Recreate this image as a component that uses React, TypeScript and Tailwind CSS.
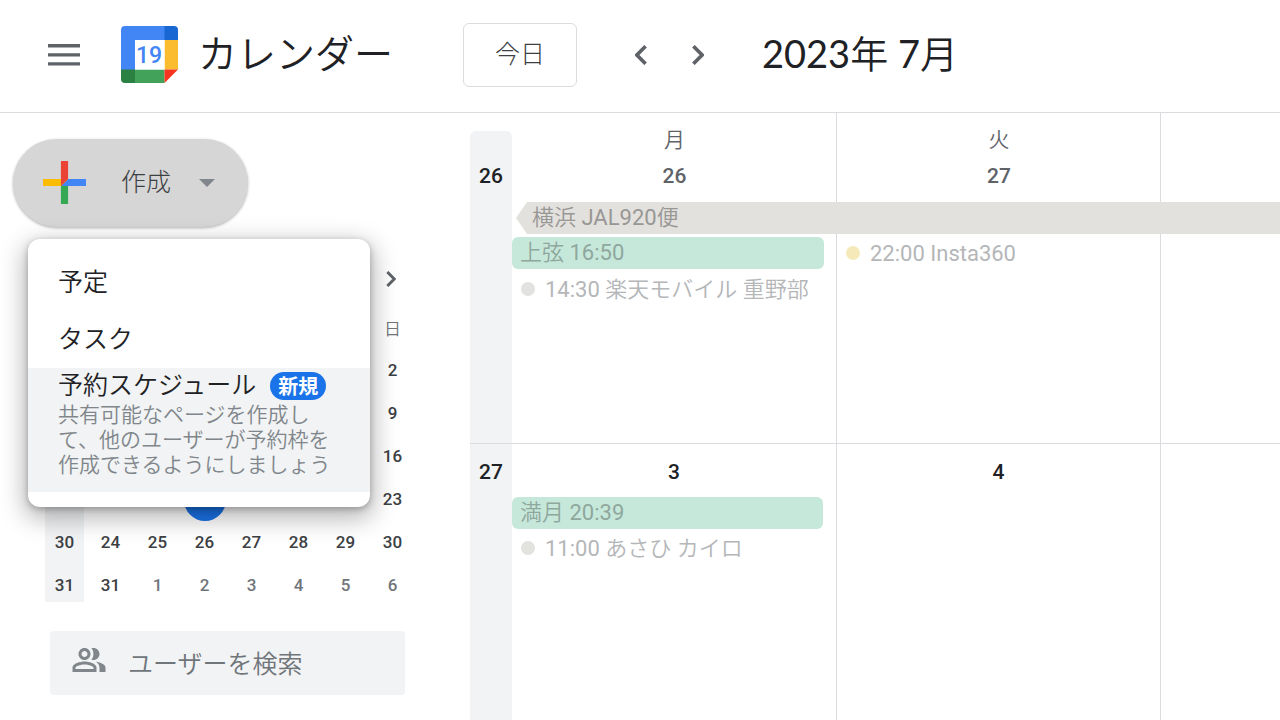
import { useState } from "react";

const miniWeekdays = [null, null, null, null, null, null, "日"];

// null cells sit under the open create menu
const miniWeeks = [
    { week: null, days: [null, null, null, null, null, null, 2] },
    { week: null, days: [null, null, null, null, null, null, 9] },
    { week: null, days: [null, null, null, null, null, null, 16] },
    { week: null, days: [null, null, null, null, null, null, 23] },
    { week: 30, days: [24, 25, 26, 27, 28, 29, 30] },
    { week: 31, days: [31, 1, 2, 3, 4, 5, 6] },
];

function Chevron({ left = false, className }: { left?: boolean; className: string }) {
    return (
        <svg viewBox="0 0 12 20" className={className} fill="none" stroke="currentColor" strokeWidth="3.6" aria-hidden="true">
            <path d={left ? "M10.6 1.2 1.9 10l8.7 8.8" : "M1.4 1.2 10.1 10l-8.7 8.8"} />
        </svg>
    );
}

function Logo() {
    return (
        <svg viewBox="0 0 57 57" className="size-[57px] shrink-0" aria-hidden="true">
            <path d="M4 0h40v14H14v30H0V4a4 4 0 0 1 4-4z" fill="#4285f4" />
            <path d="M43.5 0H53a4 4 0 0 1 4 4v10H43.5z" fill="#1967d2" />
            <path d="M43.5 14H57v29.5H43.5z" fill="#fbbc2f" />
            <path d="M14 43.5h29.5V57H14z" fill="#43a25a" />
            <path d="M0 43.5h14V57H4a4 4 0 0 1-4-4z" fill="#2a8142" />
            <path d="M43.5 43.5H57L43.5 57z" fill="#f5351f" />
            <path d="M14 14h29.5v29.5H14z" fill="#fff" />
            <text x="28" y="36.5" textAnchor="middle" fontSize="23" fontWeight="500" fontFamily="Roboto, sans-serif" fill="#4285f4">19</text>
        </svg>
    );
}

function Header() {
    return (
        <header className="flex h-[113px] items-center border-b border-[#dadce0] pb-[3px] whitespace-nowrap">
            <div className="flex w-[463px] shrink-0 items-center pl-12">
                <button type="button" aria-label="メインメニュー" className="text-[#5f6368]">
                    <svg viewBox="0 0 32 22" className="h-[22px] w-8" fill="currentColor" aria-hidden="true">
                        <path d="M0 0h32v3.4H0zM0 9.2h32v3.4H0zM0 18.2h32v3.4H0z" />
                    </svg>
                </button>
                <a href="#" className="ml-[41px] flex items-center gap-5">
                    <Logo />
                    <span className="text-[39px] leading-[56px] text-[#202124]">カレンダー</span>
                </a>
            </div>
            <button type="button" className="h-16 w-[114px] shrink-0 rounded-md border border-[#dadce0] font-[Roboto,'Noto_Sans_CJK_JP',sans-serif] text-[25px] font-light text-[#3c4043]">
                今日
            </button>
            <div className="ml-12 flex shrink-0 gap-[25px] text-[#5f6368]">
                <button type="button" aria-label="前の月" className="flex size-8 items-center justify-center">
                    <Chevron left className="h-5 w-3" />
                </button>
                <button type="button" aria-label="次の月" className="flex size-8 items-center justify-center">
                    <Chevron className="h-5 w-3" />
                </button>
            </div>
            <h1 className="ml-12 pb-1 [font-family:Lato,'Noto_Sans_CJK_JP_DemiLight','Noto_Sans_CJK_JP',sans-serif] text-[38px] leading-[56px] text-[#202124]">2023年 7月</h1>
        </header>
    );
}

function CreateMenu() {
    return (
        <div role="menu" className="absolute top-[100px] left-[15px] z-10 w-[342px] rounded-xl bg-white py-[15px] text-[25px] text-[#202124] shadow-[0_8px_24px_4px_rgba(0,0,0,0.28),0_2px_6px_rgba(0,0,0,0.25)]">
            <button type="button" role="menuitem" className="block h-[57px] w-full px-[30px] text-left">予定</button>
            <button type="button" role="menuitem" className="block h-[57px] w-full px-[30px] text-left">タスク</button>
            <button type="button" role="menuitem" className="block w-full bg-[#f1f3f4] px-[30px] pb-[14px] text-left">
                <span className="flex h-[35px] items-center gap-[14px]">
                    予約スケジュール
                    <span className="rounded-full bg-[#1a73e8] px-2 [font-family:'Noto_Sans_CJK_JP',sans-serif] text-xl leading-7 font-bold text-white">新規</span>
                </span>
                <span className="block text-[21px] leading-[25px] text-[#80868b]">
                    共有可能なページを作成して、他のユーザーが予約枠を作成できるようにしましょう
                </span>
            </button>
        </div>
    );
}

function CreateButton() {
    const [open, setOpen] = useState(true);

    return (
        <div className="relative ml-[13px]">
            <button
                type="button"
                aria-expanded={open}
                onClick={() => setOpen(!open)}
                className="flex h-[88px] w-[235px] items-center rounded-full bg-[#d6d6d6] pb-px pl-[30px] [font-family:Roboto,'Noto_Sans_CJK_JP',sans-serif] text-[25px] font-light text-[#3c4043] shadow-[0_1px_3px_rgba(0,0,0,0.3)]"
            >
                <svg viewBox="6 6 24 24" className="size-[43px]" aria-hidden="true">
                    <path fill="#34a853" d="M16 16v14h4V20z" />
                    <path fill="#4285f4" d="M30 16H20l-4 4h14z" />
                    <path fill="#fbbc05" d="M6 16v4h10l4-4z" />
                    <path fill="#ea4335" d="M20 16V6h-4v14z" />
                </svg>
                <span className="ml-[35px]">作成</span>
                <svg viewBox="0 0 16 8" className="ml-7 h-2 w-4" fill="#80868b" aria-hidden="true">
                    <path d="M0 0h16L8 8z" />
                </svg>
            </button>
            {open && <CreateMenu />}
        </div>
    );
}

function MiniCalendar() {
    return (
        <div className="mt-[30px] ml-10 w-[376px] text-[17px]">
            <div className="flex h-[43px] items-center justify-end pr-[13px] text-[#5f6368]">
                <button type="button" aria-label="次の月" className="flex size-6 items-center justify-center">
                    <Chevron className="h-4 w-[10px]" />
                </button>
            </div>
            <table className="mt-[6px] w-full table-fixed border-collapse text-center">
                <thead>
                    <tr className="h-[43px] text-[#70757a]">
                        <td />
                        {miniWeekdays.map((day, col) => (
                            <th key={col} scope="col" className="p-0 pt-1 font-normal">{day}</th>
                        ))}
                    </tr>
                </thead>
                <tbody className="font-medium text-[#3c4043]">
                    {miniWeeks.map(({ week, days }, row) => (
                        <tr key={row} className="group h-[43px]">
                            <th scope="row" className="p-0 pr-[3px] pl-[5px] align-top font-medium">
                                <div className="h-[43px] bg-[#f1f3f4] pt-[9px] leading-[25px] group-last:h-[38px]">{week}</div>
                            </th>
                            {days.map((day, col) => {
                                const outside = row === 5 && day !== 31;
                                const today = row === 3 && col === 2;
                                return (
                                    <td key={col} className={outside ? "p-0 text-[#70757a]" : "p-0"}>
                                        {today ? (
                                            <span className="mx-auto block size-[42px] rounded-full bg-[#1a73e8]" />
                                        ) : (
                                            day
                                        )}
                                    </td>
                                );
                            })}
                        </tr>
                    ))}
                </tbody>
            </table>
        </div>
    );
}

function PeopleSearch() {
    return (
        <label className="mt-6 ml-[50px] flex h-16 w-[355px] items-center rounded-sm bg-[#f1f3f4] pl-[21px]">
            <svg viewBox="0 0 24 24" className="mb-[6px] size-9 shrink-0" fill="#80868b" aria-hidden="true">
                <path d="M16.67 13.13C18.04 14.06 19 15.32 19 17v3h4v-3c0-2.18-3.57-3.47-6.33-3.87z" />
                <path d="M15 12c2.21 0 4-1.79 4-4s-1.79-4-4-4c-.47 0-.91.1-1.33.24a5.98 5.98 0 0 1 0 7.52c.42.14.86.24 1.33.24z" />
                <path d="M9 12c2.21 0 4-1.79 4-4s-1.79-4-4-4-4 1.79-4 4 1.79 4 4 4zm0-6c1.1 0 2 .9 2 2s-.9 2-2 2-2-.9-2-2 .9-2 2-2z" />
                <path d="M9 13c-2.67 0-8 1.34-8 4v3h16v-3c0-2.66-5.33-4-8-4zm6 5H3v-.99C3.2 16.29 6.3 15 9 15s5.8 1.29 6 2v1z" />
            </svg>
            <input
                type="text"
                aria-label="ユーザーを検索"
                placeholder="ユーザーを検索"
                className="ml-[21px] min-w-0 flex-1 bg-transparent pt-1 text-[25px] outline-none placeholder:text-[#70757a]"
            />
        </label>
    );
}

function AllDayEvent({ title }: { title: string }) {
    return (
        <div className="mr-[13px] h-8 rounded-md bg-[#c6e8da] px-2 leading-8 text-[#8fa79d]">{title}</div>
    );
}

function TimedEvent({ title, dot }: { title: string; dot: string }) {
    return (
        <div className="flex h-8 items-center gap-[10px] pl-[9px] text-[#b4b6b8]">
            <span className={`size-[14px] shrink-0 rounded-full ${dot}`} />
            {title}
        </div>
    );
}

function MonthGrid() {
    return (
        <main className="min-w-0 flex-1 overflow-hidden text-[22px] whitespace-nowrap">
            {/* Week 26 */}
            <section className="grid h-[331px] grid-cols-[42px_325px_324px_minmax(0,1fr)] grid-rows-[89px_32px_minmax(0,1fr)] border-b border-[#dadce0]">
                <div className="col-start-1 row-span-3 row-start-1 mt-[18px] rounded-t-md bg-[#f1f3f4] pt-[29px] text-center text-[21px] leading-8 font-medium text-[#202124]">26</div>
                <div className="col-start-2 row-span-3 row-start-1 border-r border-[#dadce0]" />
                <div className="col-start-3 row-span-3 row-start-1 border-r border-[#dadce0]" />
                <div className="col-start-2 row-start-1 pt-[11px] text-center text-[21px] text-[#5f6368]">
                    <p className="h-9 leading-8">月</p>
                    <p className="leading-8 font-medium">26</p>
                </div>
                <div className="col-start-3 row-start-1 pt-[11px] text-center text-[21px] text-[#5f6368]">
                    <p className="h-9 leading-8">火</p>
                    <p className="leading-8 font-medium">27</p>
                </div>
                <div className="col-span-3 col-start-2 row-start-2 ml-1 bg-[#e3e1dd] pl-4 leading-8 text-[#989795] [clip-path:polygon(0_50%,11px_0,100%_0,100%_100%,11px_100%)]">
                    横浜 JAL920便
                </div>
                <div className="col-start-2 row-start-3 flex flex-col gap-1 pt-[3px]">
                    <AllDayEvent title="上弦 16:50" />
                    <TimedEvent title="14:30 楽天モバイル 重野部" dot="bg-[#e2e2e0]" />
                </div>
                <div className="col-start-3 row-start-3 pt-[3px]">
                    <TimedEvent title="22:00 Insta360" dot="bg-[#f6e9b9]" />
                </div>
            </section>

            {/* Week 27 */}
            <section className="grid min-h-[276px] grid-cols-[42px_325px_324px_minmax(0,1fr)]">
                <div className="bg-[#f1f3f4] pt-3 text-center text-[21px] leading-8 font-medium text-[#202124]">27</div>
                <div className="border-r border-[#dadce0] pt-3">
                    <p className="h-[41px] text-center text-[21px] leading-8 font-medium text-[#202124]">3</p>
                    <div className="flex flex-col gap-[3px]">
                        <AllDayEvent title="満月 20:39" />
                        <TimedEvent title="11:00 あさひ カイロ" dot="bg-[#e2e2de]" />
                    </div>
                </div>
                <div className="border-r border-[#dadce0] pt-3">
                    <p className="text-center text-[21px] leading-8 font-medium text-[#202124]">4</p>
                </div>
            </section>
        </main>
    );
}

export default function App() {
    return (
        <div className="flex min-h-screen flex-col overflow-hidden bg-white [font-family:Roboto,'Noto_Sans_CJK_JP_DemiLight','Noto_Sans_CJK_JP',sans-serif]" lang="ja">
            <Header />
            <div className="flex flex-1">
                <aside className="w-[470px] shrink-0 pt-[26px]">
                    <CreateButton />
                    <MiniCalendar />
                    <PeopleSearch />
                </aside>
                <MonthGrid />
            </div>
        </div>
    );
}
